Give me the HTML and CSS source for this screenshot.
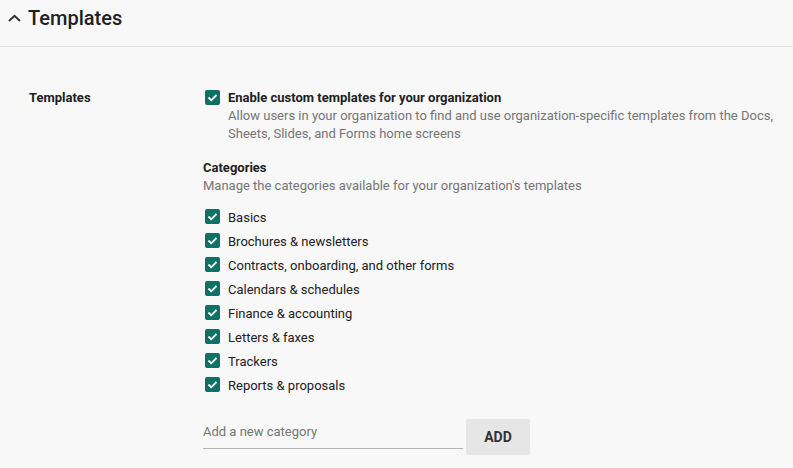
FILE: index.html
```html
<!DOCTYPE html>
<html lang="en">
<head>
    <meta charset="UTF-8">
    <meta name="viewport" content="width=device-width, initial-scale=1.0">
    <title>Templates</title>
    <link rel="stylesheet" href="styles.css">
</head>
<body>
    <div class="header">
        <svg class="chevron" width="13" height="8" viewBox="0 0 13 8"><path d="M1 7 L6.5 1.8 L12 7" fill="none" stroke="#333" stroke-width="2"/></svg>
        <h1>Templates</h1>
    </div>
    <div class="section">
        <div class="label">Templates</div>
        <div class="settings">
            <div class="option">
                <span class="box"><svg width="15" height="15" viewBox="0 0 15 15"><path d="M3.5 7.5 L6.3 10.3 L11.5 5" fill="none" stroke="#fff" stroke-width="1.8"/></svg></span>
                <div>
                    <div class="title">Enable custom templates for your organization</div>
                    <div class="desc">Allow users in your organization to find and use organization-specific templates from the Docs, Sheets, Slides, and Forms home screens</div>
                </div>
            </div>
            <div class="group">
                <div class="title">Categories</div>
                <div class="desc">Manage the categories available for your organization's templates</div>
            </div>
            <ul class="categories">
                <li><span class="box"><svg width="15" height="15" viewBox="0 0 15 15"><path d="M3.5 7.5 L6.3 10.3 L11.5 5" fill="none" stroke="#fff" stroke-width="1.8"/></svg></span>Basics</li>
                <li><span class="box"><svg width="15" height="15" viewBox="0 0 15 15"><path d="M3.5 7.5 L6.3 10.3 L11.5 5" fill="none" stroke="#fff" stroke-width="1.8"/></svg></span>Brochures &amp; newsletters</li>
                <li><span class="box"><svg width="15" height="15" viewBox="0 0 15 15"><path d="M3.5 7.5 L6.3 10.3 L11.5 5" fill="none" stroke="#fff" stroke-width="1.8"/></svg></span>Contracts, onboarding, and other forms</li>
                <li><span class="box"><svg width="15" height="15" viewBox="0 0 15 15"><path d="M3.5 7.5 L6.3 10.3 L11.5 5" fill="none" stroke="#fff" stroke-width="1.8"/></svg></span>Calendars &amp; schedules</li>
                <li><span class="box"><svg width="15" height="15" viewBox="0 0 15 15"><path d="M3.5 7.5 L6.3 10.3 L11.5 5" fill="none" stroke="#fff" stroke-width="1.8"/></svg></span>Finance &amp; accounting</li>
                <li><span class="box"><svg width="15" height="15" viewBox="0 0 15 15"><path d="M3.5 7.5 L6.3 10.3 L11.5 5" fill="none" stroke="#fff" stroke-width="1.8"/></svg></span>Letters &amp; faxes</li>
                <li><span class="box"><svg width="15" height="15" viewBox="0 0 15 15"><path d="M3.5 7.5 L6.3 10.3 L11.5 5" fill="none" stroke="#fff" stroke-width="1.8"/></svg></span>Trackers</li>
                <li><span class="box"><svg width="15" height="15" viewBox="0 0 15 15"><path d="M3.5 7.5 L6.3 10.3 L11.5 5" fill="none" stroke="#fff" stroke-width="1.8"/></svg></span>Reports &amp; proposals</li>
            </ul>
            <div class="add-row">
                <input type="text" placeholder="Add a new category">
                <button>ADD</button>
            </div>
        </div>
    </div>
</body>
</html>
```

FILE: styles.css
```css
* {
    box-sizing: border-box;
    margin: 0;
    padding: 0;
}
body {
    font-family: Roboto, Arial, sans-serif;
    background-color: #f8f8f8;
    color: #212121;
    font-size: 13px;
}
.header {
    display: flex;
    align-items: center;
    height: 47px;
    padding: 0 0 11px 8px;
    border-bottom: 1px solid #e4e4e4;
}
.chevron {
    margin-right: 7px;
}
h1 {
    font-size: 20px;
    font-weight: 500;
    line-height: 36px;
    color: #202124;
}
.section {
    display: flex;
    padding: 42px 0 0 29px;
}
.label {
    width: 174px;
    flex: 0 0 174px;
    font-weight: 700;
    line-height: 18px;
}
.settings {
    flex: 1;
    padding-right: 16px;
}
.option {
    display: flex;
    align-items: flex-start;
}
.box {
    display: inline-flex;
    width: 15px;
    height: 15px;
    flex: 0 0 15px;
    background-color: #0b7264;
    border-radius: 2px;
    margin: 1px 8px 0 2px;
}
.title {
    font-weight: 700;
    line-height: 18px;
}
.desc {
    color: #757575;
    line-height: 18px;
}
.group {
    margin-top: 16px;
}
.categories {
    list-style: none;
    margin-top: 10px;
}
.categories li {
    display: flex;
    align-items: center;
    height: 24px;
}
.categories .box {
    margin-top: -2px;
}
.add-row {
    display: flex;
    margin-top: 22px;
}
input {
    width: 260px;
    height: 30px;
    border: none;
    border-bottom: 1px solid #b5b5b5;
    background: transparent;
    font-family: Roboto, Arial, sans-serif;
    font-size: 13px;
    padding: 0 0 4px;
    outline: none;
}
input::placeholder {
    color: #757575;
}
button {
    width: 64px;
    height: 36px;
    margin-left: 3px;
    border: none;
    border-radius: 2px;
    background-color: #e6e6e6;
    color: #333;
    font-family: Roboto, Arial, sans-serif;
    font-size: 14px;
    font-weight: 700;
}
```
